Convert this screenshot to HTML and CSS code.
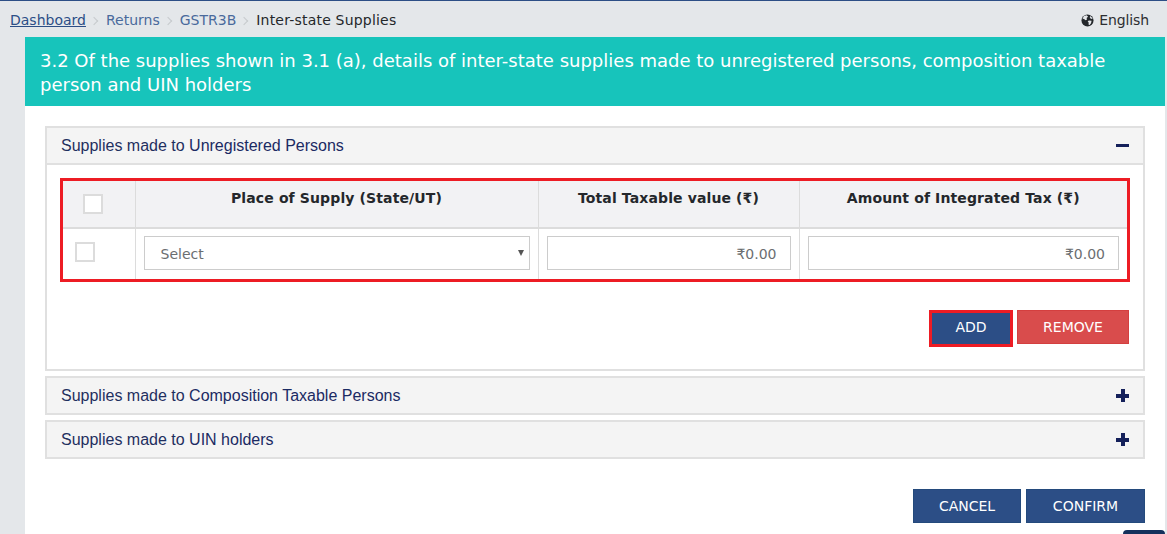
FILE: index.html
```html
<!DOCTYPE html>
<html lang="en">

<head>
    <meta charset="UTF-8">
    <meta name="viewport" content="width=device-width, initial-scale=1.0">
    <title>Inter-state Supplies</title>
    <link rel="stylesheet" href="styles.css">
</head>

<body>
    <div class="topbar">
        <ol class="crumbs">
            <li><a class="crumb-first" href="#">Dashboard</a></li>
            <li><a href="#">Returns</a></li>
            <li><a href="#">GSTR3B</a></li>
            <li class="crumb-current">Inter-state Supplies</li>
        </ol>
        <div class="lang">
            <svg class="globe" viewBox="0 0 14 14" width="13" height="13">
                <circle cx="7" cy="7" r="6.5" fill="#23272b"/>
                <path d="M3 2.2 6.2 1.4 7.6 3 6 4.4 6.6 6 4.6 6.6 3.2 5 1.6 5.6Z" fill="#e4e7ea"/>
                <path d="M8.4 7 11.4 7.4 10.8 10 9 12.2 8 11 8.4 9.4 7.2 8.2Z" fill="#e4e7ea"/>
                <path d="M10 2.2 12 4 12.4 5.4 10.6 5 9.4 3.6Z" fill="#e4e7ea"/>
            </svg>
            English
        </div>
    </div>

    <div class="content">
        <h1 class="page-title">3.2 Of the supplies shown in 3.1 (a), details of inter-state supplies made to unregistered persons, composition taxable person and UIN holders</h1>

        <div class="panels">
            <div class="panel panel-open">
                <div class="panel-head">
                    <span>Supplies made to <span class="navy">Unregistered Persons</span></span>
                    <span class="icon-minus"></span>
                </div>
                <div class="panel-body">
                    <div class="mark-box">
                        <table class="supply-table">
                            <thead>
                                <tr>
                                    <th class="col-check"><span class="check check-head"></span></th>
                                    <th class="col-place">Place of Supply (State/UT)</th>
                                    <th class="col-taxable">Total Taxable value (₹)</th>
                                    <th>Amount of Integrated Tax (₹)</th>
                                </tr>
                            </thead>
                            <tbody>
                                <tr>
                                    <td class="col-check"><span class="check check-row"></span></td>
                                    <td>
                                        <div class="field field-select">Select<span class="caret"></span></div>
                                    </td>
                                    <td><div class="field field-num">₹0.00</div></td>
                                    <td><div class="field field-num">₹0.00</div></td>
                                </tr>
                            </tbody>
                        </table>
                    </div>
                    <div class="row-actions">
                        <button class="btn btn-blue btn-add">ADD</button>
                        <button class="btn btn-red">REMOVE</button>
                    </div>
                </div>
            </div>

            <div class="panel">
                <div class="panel-head">
                    <span>Supplies made to <span class="navy">Composition Taxable Persons</span></span>
                    <span class="icon-plus"></span>
                </div>
            </div>

            <div class="panel">
                <div class="panel-head">
                    <span>Supplies made to <span class="navy">UIN holders</span></span>
                    <span class="icon-plus"></span>
                </div>
            </div>
        </div>

        <div class="page-actions">
            <button class="btn btn-blue btn-cancel">CANCEL</button>
            <button class="btn btn-blue btn-confirm">CONFIRM</button>
        </div>
    </div>

    <div class="to-top"></div>
</body>

</html>
```

FILE: styles.css
```css
* {
    box-sizing: border-box;
}
html, body {
    height: 534px;
    overflow: hidden;
}
body {
    margin: 0;
    position: relative;
    background-color: #e4e7ea;
    border-top: 1px solid #2c4e86;
    font-family: "DejaVu Sans", sans-serif;
    font-size: 14px;
    color: #2c2e31;
}
.topbar {
    display: flex;
    justify-content: space-between;
    height: 36px;
    padding: 11px 18px 0 10px;
    line-height: 16px;
}
.crumbs {
    display: flex;
    margin: 0;
    padding: 0;
    list-style-type: none;
}
.crumbs li {
    margin-right: 20px;
    position: relative;
}
.crumbs li:not(.crumb-current):after {
    content: "";
    position: absolute;
    top: 6px;
    right: -11px;
    width: 5px;
    height: 5px;
    border-top: 1px solid #c6cacd;
    border-right: 1px solid #c6cacd;
    transform: rotate(45deg);
}
.crumbs a {
    color: #4a6a9c;
    text-decoration: none;
}
.crumbs .crumb-first {
    color: #2c4e86;
    text-decoration: underline;
}
.crumb-current {
    color: #24272b;
    letter-spacing: .2px;
}
.lang {
    display: flex;
    align-items: center;
    gap: 5px;
    height: 16px;
    letter-spacing: -.1px;
}
.content {
    width: 1140px;
    height: 497px;
    margin-left: 25px;
    background: #fff;
}
.page-title {
    margin: 0;
    padding: 12px 40px 9px 15px;
    height: 69px;
    background: #17c4bb;
    color: #fff;
    font-size: 18px;
    font-weight: 400;
    line-height: 24px;
}
.panels {
    padding: 20px 20px 0;
}
.panel {
    margin-bottom: 5px;
    border: 2px solid #e0e0e0;
}
.panel-head {
    display: flex;
    align-items: center;
    justify-content: space-between;
    height: 35px;
    padding: 0 14px;
    background: #f4f4f4;
    font-family: "Liberation Sans", sans-serif;
    font-size: 16px;
    color: #1f2f5f;
}
.navy {
    color: #1b2a63;
}
.panel-open {
    height: 245px;
}
.panel-open .panel-head {
    border-bottom: 2px solid #e0e0e0;
    height: 37px;
}
.panel-body {
    padding: 13px 13px 0;
}
.mark-box {
    border: 3px solid #ed1c24;
}
.supply-table {
    width: 100%;
    border-collapse: collapse;
    table-layout: fixed;
}
.supply-table th {
    height: 46px;
    padding: 0 0 13px;
    background: #f2f2f4;
    border-left: 1px solid #dcdcdc;
    border-bottom: 2px solid #dcdcdc;
    font-size: 14px;
    font-weight: 700;
    letter-spacing: .12px;
    color: #24272b;
}
.supply-table td {
    height: 51px;
    padding: 0 8px 2px;
    border-left: 1px solid #dcdcdc;
}
.supply-table th:first-child, .supply-table td:first-child {
    border-left: 0;
}
.col-check {
    width: 72px;
}
.col-place {
    width: 403px;
}
.col-taxable {
    width: 261px;
}
.check {
    display: block;
    width: 20px;
    height: 20px;
    background: #fff;
    border: 2px solid #dcdcdc;
}
.check-head {
    margin: 13px 0 0 20px;
}
.check-row {
    margin: 0 0 2px 4px;
}
.field {
    height: 34px;
    border: 1px solid #ccc;
    background: #fff;
    line-height: 34px;
    font-size: 14px;
    color: #6b6e71;
}
.field-select {
    position: relative;
    padding-left: 16px;
}
.caret {
    position: absolute;
    top: 13px;
    right: 5px;
    border-left: 3px solid transparent;
    border-right: 3px solid transparent;
    border-top: 6px solid #555;
}
.field-num {
    padding-right: 13px;
    text-align: right;
}
.row-actions {
    display: flex;
    justify-content: flex-end;
    align-items: flex-start;
    gap: 4px;
    margin: 28px 1px 0 0;
}
.page-actions {
    display: flex;
    justify-content: flex-end;
    gap: 5px;
    margin: 30px 20px 0 0;
}
.btn {
    height: 34px;
    padding: 0;
    border: 1px solid #244a7c;
    border-radius: 0;
    color: #fff;
    font-family: "DejaVu Sans", sans-serif;
    font-size: 14px;
}
.btn-blue {
    background: #2c4e86;
}
.btn-red {
    width: 112px;
    background: #d94c4c;
    border-color: #d43f3f;
}
.btn-add {
    width: 84px;
    height: 37px;
    padding-bottom: 3px;
    border: 3px solid #ed1c24;
}
.btn-cancel {
    width: 108px;
}
.btn-confirm {
    width: 119px;
}
.icon-minus, .icon-plus {
    position: relative;
    display: block;
    width: 13px;
    height: 13px;
}
.icon-minus:before, .icon-plus:before {
    content: "";
    position: absolute;
    left: 0;
    top: 5px;
    width: 13px;
    height: 3px;
    background: #14205a;
}
.icon-plus:before {
    top: 4.5px;
    height: 4px;
}
.icon-plus:after {
    content: "";
    position: absolute;
    left: 4.5px;
    top: 0;
    width: 4px;
    height: 13px;
    background: #14205a;
}
.to-top {
    position: absolute;
    right: 2px;
    bottom: 0;
    width: 42px;
    height: 4px;
    background: #14305c;
    border-radius: 4px 4px 0 0;
}
```
